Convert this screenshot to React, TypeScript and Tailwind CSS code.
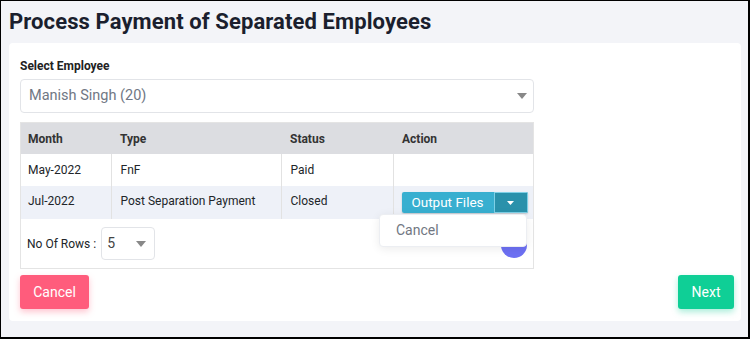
import React from "react";

function Caret({ className = "" }: { className?: string }) {
  return (
    <svg width="10" height="6" viewBox="0 0 10 6" className={className}>
      <path d="M0 0 L10 0 L5 6 Z" fill="currentColor" />
    </svg>
  );
}

export default function App() {
  return (
    <div className="w-[750px] h-[339px] bg-[#f3f4f8] border-l border-t border-r-2 border-b-2 border-black font-['Roboto',sans-serif] text-[#212529] overflow-hidden">
      <h1 className="pl-[8px] pt-[7px] h-[42px] text-[22px] leading-[28px] font-bold text-[#1b1f2e] tracking-[0.1px]">
        Process Payment of Separated Employees
      </h1>
      <div className="ml-[8px] w-[732px] h-[278px] bg-white rounded-[4px] px-[11px] pt-[15px]">
        <div className="text-[12px] font-bold leading-[16px] text-[#222]">Select Employee</div>
        <div className="mt-[5px] w-[514px] h-[34px] border border-[#e2e4e8] rounded-[4px] flex items-center justify-between pl-[8px] pr-[6px]">
          <span className="text-[14.5px] text-[#707784]">Manish Singh (20)</span>
          <Caret className="text-[#888]" />
        </div>
        <div className="relative mt-[9px] w-[514px] border border-[#e4e4e4]">
          <table className="w-full border-collapse text-[12px]">
            <thead>
              <tr className="bg-[#dcdde1] h-[31px] text-left">
                <th className="w-[90px] pl-[7px] font-bold text-[#333]">Month</th>
                <th className="w-[170px] pl-[9px] font-bold text-[#333]">Type</th>
                <th className="w-[112px] pl-[9px] font-bold text-[#333]">Status</th>
                <th className="pl-[9px] font-bold text-[#333]">Action</th>
              </tr>
            </thead>
            <tbody>
              <tr className="h-[32px] bg-white">
                <td className="pl-[7px] border-r border-[#e2e2e2]">May-2022</td>
                <td className="pl-[9px] border-r border-[#e2e2e2]">FnF</td>
                <td className="pl-[9px] border-r border-[#e2e2e2]">Paid</td>
                <td></td>
              </tr>
              <tr className="h-[33px] bg-[#eef1f8]">
                <td className="pl-[7px] border-r border-[#e2e2e2] pb-[3px]">Jul-2022</td>
                <td className="pl-[9px] border-r border-[#e2e2e2] pb-[3px]">Post Separation Payment</td>
                <td className="pl-[9px] border-r border-[#e2e2e2] pb-[3px]">Closed</td>
                <td className="pl-[8px]">
                  <div className="flex h-[21px] w-[126px] rounded-[2px] overflow-hidden shadow-[0_1px_2px_rgba(0,0,0,0.2)]">
                    <div className="w-[92px] bg-[#38afd0] text-white text-[13.5px] flex items-center justify-center">Output Files</div>
                    <div className="flex-1 bg-[#2a91ab] border border-[#7fd0e6] flex items-center justify-center text-white">
                      <svg width="7" height="4" viewBox="0 0 7 4"><path d="M0 0 L7 0 L3.5 4 Z" fill="currentColor" /></svg>
                    </div>
                  </div>
                </td>
              </tr>
            </tbody>
          </table>
          <div className="h-[49px] flex items-center pl-[6px] text-[12px]">
            <span>No Of Rows :</span>
            <div className="ml-[5px] w-[54px] h-[33px] border border-[#e2e4e8] rounded-[4px] flex items-center justify-between pl-[5px] pr-[8px]">
              <span className="text-[14px] text-[#444]">5</span>
              <Caret className="text-[#888]" />
            </div>
          </div>
          <div className="absolute left-[480px] top-[109px] w-[26px] h-[26px] rounded-full bg-[#6d70f3]"></div>
          <div className="absolute left-[358px] top-[91px] w-[148px] h-[33px] bg-white rounded-[4px] border border-[#eceef2] shadow-[0_2px_10px_rgba(0,0,0,0.08)] flex items-center pl-[16px]">
            <span className="text-[14px] text-[#717782]">Cancel</span>
          </div>
        </div>
        <div className="mt-[6px] flex justify-between w-[714px]">
          <button className="w-[69px] h-[34px] rounded-[3px] bg-[#ff5c7c] text-white text-[14px] shadow-[0_3px_6px_rgba(255,92,124,0.35)]">Cancel</button>
          <button className="w-[56px] h-[34px] rounded-[3px] bg-[#0fcf96] text-white text-[14px] shadow-[0_3px_6px_rgba(15,207,150,0.35)]">Next</button>
        </div>
      </div>
    </div>
  );
}
